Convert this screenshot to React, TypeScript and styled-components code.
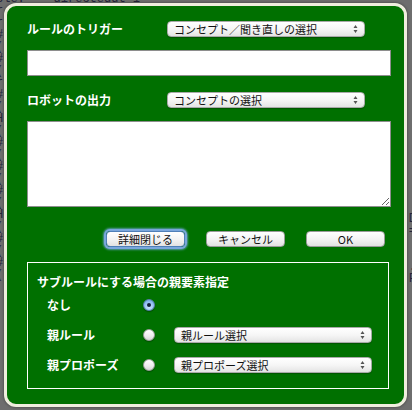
import React, { useState } from 'react';
import styled, { createGlobalStyle, css } from 'styled-components';

const GlobalStyle = createGlobalStyle`
  html, body {
    margin: 0;
    padding: 0;
    background: #6e6e6e;
  }
`;

const jp = `"Noto Sans CJK JP", "Liberation Sans", sans-serif`;

const Page = styled.div`
  position: relative;
  display: flow-root;
  width: 412px;
  height: 410px;
  overflow: hidden;
  background: #6e6e6e;
`;

const Backdrop = styled.div`
  display: flex;
  justify-content: space-between;
  margin: -7px -4px 0 -4px;
`;

const BackText = styled.pre<{ $top?: number }>`
  margin: ${(p) => p.$top ?? 0}px 0 0 0;
  font-family: "Liberation Mono", monospace;
  font-size: 12px;
  line-height: 12px;
  color: #24243a;
`;

const Dialog = styled.div`
  position: absolute;
  left: 4px;
  top: 3px;
  width: 403px;
  height: 404px;
  box-sizing: border-box;
  border: 3px solid #efeede;
  border-radius: 12px;
  background: #007000;
  box-shadow: 0 0 3px rgba(0, 0, 0, 0.45);
  padding: 15px 13px 0 20px;
  font-family: ${jp};
  font-size: 12px;
`;

const Row = styled.div`
  display: flex;
  align-items: center;
  height: 16px;
`;

const Label = styled.span<{ $width: number }>`
  width: ${(p) => p.$width}px;
  flex: none;
  color: #fff;
  font-size: 12px;
  font-weight: bold;
  line-height: 14px;
`;

const SelectWrap = styled.div`
  position: relative;
  width: 198px;
  height: 16px;
  flex: none;
`;

const Select = styled.select`
  display: block;
  appearance: none;
  width: 100%;
  height: 100%;
  box-sizing: border-box;
  margin: 0;
  padding: 0 16px 0 6px;
  border: 1px solid #a9a9a9;
  border-radius: 4px;
  background: linear-gradient(#ffffff, #f6f6f6 50%, #e4e4e4);
  box-shadow: 0 1px 1px rgba(0, 0, 0, 0.25);
  font-family: ${jp};
  font-size: 11px;
  line-height: 14px;
  color: #111;
  outline: none;
`;

const Arrows = styled.svg`
  position: absolute;
  right: 7px;
  top: 3px;
  pointer-events: none;
`;

const field = css`
  display: block;
  width: 364px;
  box-sizing: border-box;
  border: 1px solid #8e8e8e;
  background: #fff;
  margin: 0;
`;

const TextInput = styled.input`
  ${field};
  height: 26px;
  margin-top: 13px;
  margin-bottom: 16px;
`;

const TextArea = styled.textarea`
  ${field};
  height: 86px;
  margin-top: 13px;
`;

const ButtonRow = styled.div`
  display: flex;
  gap: 21px;
  margin: 24px 0 0 79px;
`;

const Button = styled.button<{ $focused?: boolean }>`
  display: block;
  width: 79px;
  height: 16px;
  padding: 0;
  border: 1px solid #9a9a9a;
  border-radius: 4px;
  background: linear-gradient(#ffffff, #f4f4f4 50%, #e2e2e2);
  font-family: ${jp};
  font-size: 11px;
  line-height: 14px;
  color: #111;
  ${(p) =>
    p.$focused &&
    css`
      box-shadow: 0 0 0 2px #79a6dc, 0 0 2px 3px rgba(120, 170, 230, 0.7);
      border-color: #4f7fb8;
    `}
`;

const Box = styled.div`
  width: 362px;
  height: 127px;
  box-sizing: border-box;
  margin-top: 15px;
  border: 1px solid #fff;
  padding: 12px 0 0 9px;
`;

const BoxTitle = styled.div`
  color: #fff;
  font-size: 12px;
  font-weight: bold;
  line-height: 14px;
`;

const Options = styled.div`
  display: flex;
  flex-direction: column;
  gap: 14px;
  margin: 8px 0 0 10px;
`;

const Radio = styled.span<{ $checked?: boolean }>`
  width: 12px;
  height: 12px;
  box-sizing: border-box;
  border-radius: 50%;
  margin-right: 19px;
  flex: none;
  display: flex;
  align-items: center;
  justify-content: center;
  border: 1px solid ${(p) => (p.$checked ? '#5a7fae' : '#9c9c9c')};
  background: ${(p) =>
    p.$checked
      ? 'radial-gradient(circle at 50% 70%, #cfe6ff, #8dbcf0 60%, #5f98d8)'
      : 'linear-gradient(#ffffff, #ececec 60%, #d6d6d6)'};
  box-shadow: 0 1px 1px rgba(0, 0, 0, 0.3);

  &::after {
    content: '';
    display: ${(p) => (p.$checked ? 'block' : 'none')};
    width: 4px;
    height: 4px;
    border-radius: 50%;
    background: #10203a;
  }
`;

function Picker({ value }: { value: string }) {
  return (
    <SelectWrap>
      <Select defaultValue={value}>
        <option>{value}</option>
      </Select>
      <Arrows width="5" height="10" viewBox="0 0 5 10">
        <path d="M2.5 1 L4.5 4 H0.5 Z M0.5 6 H4.5 L2.5 9 Z" fill="#555" />
      </Arrows>
    </SelectWrap>
  );
}

const leftLines = [
  'ple:    directeddt=1',
  'r',
  'r',
  '#',
  '(',
  '#',
  '(',
  'r',
  '#',
  '(',
  'H',
  '(',
  '#',
  '(',
  '#',
  '(',
  '#',
  '(',
  'H',
  '(',
  '#',
  '(',
  '#',
  '(',
];

const rightLines = ['D', '=', '', '', '.', 'F'];

export default function App() {
  const [parent, setParent] = useState('none');

  return (
    <>
      <GlobalStyle />
      <Page>
        <Backdrop>
          <BackText>{leftLines.join('\n')}</BackText>
          <BackText $top={220}>{rightLines.join('\n')}</BackText>
        </Backdrop>
        <Dialog>
          <Row>
            <Label $width={140}>ルールのトリガー</Label>
            <Picker value="コンセプト／聞き直しの選択" />
          </Row>
          <TextInput type="text" />
          <Row>
            <Label $width={140}>ロボットの出力</Label>
            <Picker value="コンセプトの選択" />
          </Row>
          <TextArea />
          <ButtonRow>
            <Button $focused>詳細閉じる</Button>
            <Button>キャンセル</Button>
            <Button>OK</Button>
          </ButtonRow>
          <Box>
            <BoxTitle>サブルールにする場合の親要素指定</BoxTitle>
            <Options>
              <Row>
                <Label $width={96}>なし</Label>
                <Radio $checked={parent === 'none'} onClick={() => setParent('none')} />
              </Row>
              <Row>
                <Label $width={96}>親ルール</Label>
                <Radio $checked={parent === 'rule'} onClick={() => setParent('rule')} />
                <Picker value="親ルール選択" />
              </Row>
              <Row>
                <Label $width={96}>親プロポーズ</Label>
                <Radio $checked={parent === 'propose'} onClick={() => setParent('propose')} />
                <Picker value="親プロポーズ選択" />
              </Row>
            </Options>
          </Box>
        </Dialog>
      </Page>
    </>
  );
}
